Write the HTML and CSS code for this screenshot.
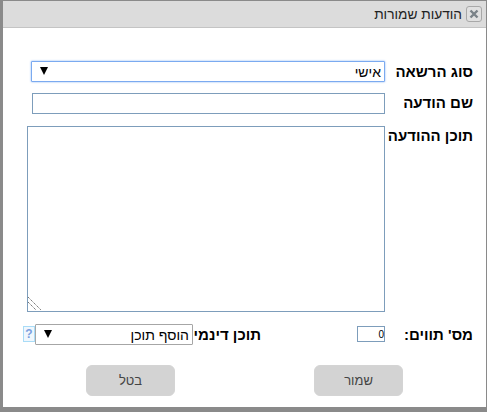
FILE: index.html
```html
<!DOCTYPE html>
<html lang="he" dir="rtl">
<head>
    <meta charset="UTF-8">
    <title>הודעות שמורות</title>
    <link rel="stylesheet" href="styles.css">
</head>
<body>
    <div class="dialog">
        <div class="titlebar">
            <button class="close" aria-label="סגור">
                <svg width="10" height="10" viewBox="0 0 10 10"><path d="M1.5 1.5l7 7M8.5 1.5l-7 7" stroke="#7a8288" stroke-width="2.4" fill="none"/></svg>
            </button>
            <span class="title">הודעות שמורות</span>
        </div>

        <form class="form">
            <div class="row row-type">
                <label class="label">סוג הרשאה</label>
                <div class="select-wrap select-type">
                    <select class="select">
                        <option>אישי</option>
                    </select>
                </div>
            </div>
            <div class="row row-name">
                <label class="label">שם הודעה</label>
                <input class="input input-name" type="text">
            </div>
            <div class="row row-body">
                <label class="label">תוכן ההודעה</label>
                <div class="textarea-wrap">
                    <textarea class="textarea"></textarea>
                    <!-- resize grip -->
                    <svg class="grip" width="14" height="14" viewBox="0 0 14 14">
                        <path d="M0 0l13 13M0 5l8 8" stroke="#777" stroke-width="1" stroke-dasharray="1.4 0.7" fill="none"/>
                    </svg>
                </div>
            </div>
            <div class="row row-meta">
                <label class="label label-count">מס' תווים:</label>
                <input class="input input-count" type="text" value="0" dir="ltr">
                <label class="label label-dynamic">תוכן דינמי</label>
                <div class="select-wrap select-dynamic">
                    <select class="select">
                        <option>הוסף תוכן</option>
                    </select>
                </div>
                <span class="help">?</span>
            </div>
            <div class="actions">
                <button class="button" type="button">שמור</button>
                <button class="button" type="button">בטל</button>
            </div>
        </form>
    </div>
</body>
</html>
```

FILE: styles.css
```css
html, body {
    height: 100%;
}
body {
    margin: 0;
    background-color: #8a8a8a;
    font-family: "Liberation Sans", Arial, sans-serif;
    color: #000;
    overflow: hidden;
}
.dialog {
    margin: 1px 1px 0 3px;
    height: 406px;
    background-color: #fff;
}
.titlebar {
    height: 26px;
    display: flex;
    align-items: center;
    padding-right: 4px;
    background-color: #dcdcdc;
    border-bottom: 1px solid #c4c4c4;
}
.close {
    width: 16px;
    height: 16px;
    padding: 0;
    display: flex;
    align-items: center;
    justify-content: center;
    background-color: #e0e0e0;
    border: 1px solid #a8a8a8;
    border-radius: 3px;
}
.title {
    margin-right: 4px;
    font-size: 13.7px;
    color: #222;
}
.form {
    padding: 33px 13px 0 0;
}
.row {
    display: flex;
    align-items: flex-start;
}
.label {
    width: 88px;
    flex: none;
    font-size: 15px;
    font-weight: bold;
    line-height: 17px;
}
.row-type {
    height: 32px;
}
.row-type .label {
    padding-top: 2px;
}
.row-name {
    height: 33px;
}
.row-name .label {
    padding-top: 1px;
}
.row-body {
    height: 198px;
}
.row-body .label {
    margin-top: 1px;
}
.input, .textarea {
    box-sizing: border-box;
    padding: 1px 2px;
    border: 1px solid #7d9dbb;
    background-color: #fff;
    outline: none;
    font-family: inherit;
}
.input-name {
    width: 353px;
    height: 21px;
}
.textarea-wrap {
    position: relative;
}
.textarea {
    display: block;
    width: 358px;
    height: 186px;
    resize: none;
}
.grip {
    position: absolute;
    left: 1px;
    bottom: 1px;
}
.select-wrap {
    position: relative;
    flex: none;
}
.select-wrap::after {
    content: "";
    position: absolute;
    left: 9px;
    top: 6px;
    border-style: solid;
    border-width: 8px 4px 0;
    border-color: #000 transparent transparent;
    pointer-events: none;
}
.select {
    display: block;
    box-sizing: border-box;
    width: 100%;
    height: 100%;
    padding: 0 3px;
    appearance: none;
    border-radius: 1px;
    background-color: #fff;
    font-family: inherit;
    font-size: 14px;
    color: #000;
    outline: none;
}
.select-type {
    width: 354px;
    height: 21px;
}
.select-type .select {
    border: 1px solid #7baaf0;
    box-shadow: 0 0 2px #7baaf0;
}
.select-dynamic {
    width: 158px;
    height: 21px;
}
.select-dynamic .select {
    border: 1px solid #a6a6a6;
}
.row-meta {
    height: 41px;
}
.label-count {
    padding-top: 2px;
}
.input-count {
    width: 28px;
    height: 16px;
    margin-top: 2px;
    flex: none;
    font-size: 10px;
    text-align: right;
    padding: 0;
}
.label-dynamic {
    margin-right: 96px;
    padding-top: 2px;
    width: 68px;
}
.help {
    box-sizing: border-box;
    width: 12px;
    height: 16px;
    margin: 2px 0 0 0;
    border: 1px solid #a9dcf7;
    background-color: #f0f7fd;
    text-align: center;
    font-size: 12px;
    font-weight: bold;
    line-height: 14px;
    color: #7ba0e0;
}
.actions {
    display: flex;
    gap: 139px;
    padding-right: 70px;
}
.button {
    width: 89px;
    height: 31px;
    border: 1px solid #d4d4d4;
    border-radius: 6px;
    background-color: #d3d3d3;
    font-family: inherit;
    font-size: 13px;
    color: #444;
}
```
